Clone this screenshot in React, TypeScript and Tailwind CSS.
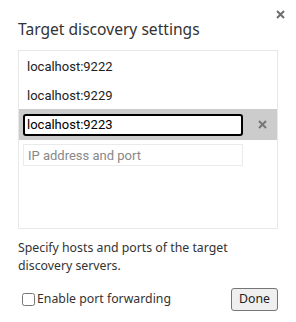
import { useState } from "react";

const hosts = ["localhost:9222", "localhost:9229"];

export default function App() {
  const [editing, setEditing] = useState("localhost:9223");
  const [forwarding, setForwarding] = useState(false);

  return (
    <div className="relative w-[296px] h-[322px] bg-white overflow-hidden rounded-bl-[3px] font-['Noto_Sans',sans-serif] text-[#303030]">
      {/* Close */}
      <button className="absolute right-[10px] top-[8px] w-[12px] h-[12px] flex items-center justify-center text-[#6e6e6e]">
        <svg width="9" height="9" viewBox="0 0 9 9">
          <path d="M1 1L8 8M8 1L1 8" stroke="currentColor" strokeWidth="2" />
        </svg>
      </button>

      <div className="px-[18px] pt-[17px]">
        <div className="text-[15.6px] leading-[24px] text-[#333]">Target discovery settings</div>

        {/* Host list */}
        <div className="mt-[9px] h-[179px] border border-[#e8e8e8] font-['Roboto',sans-serif] text-[13px] text-[#222]">
          {hosts.map((h) => (
            <div key={h} className="h-[29px] flex items-center pl-[8px] pt-[3px]">
              {h}
            </div>
          ))}
          <div className="h-[31px] bg-[#cccccc] flex items-center pl-[4px] pr-[10px]">
            <input
              value={editing}
              onChange={(e) => setEditing(e.target.value)}
              className="w-[220px] h-[22px] border-2 border-black rounded-[3px] bg-white px-[2px] text-[13px] text-black outline-none"
            />
            <span className="ml-auto text-[#777]">
              <svg width="9" height="9" viewBox="0 0 9 9">
                <path d="M1 1L8 8M8 1L1 8" stroke="currentColor" strokeWidth="2" />
              </svg>
            </span>
          </div>
          <div className="pl-[4px] pt-[4px]">
            <input
              placeholder="IP address and port"
              className="w-[220px] h-[22px] border border-[#ebebeb] px-[4px] text-[13px] placeholder:text-[#888] outline-none"
            />
          </div>
        </div>

        <p className="mt-[10px] text-[12.3px] leading-[18px] text-[#333]">
          Specify hosts and ports of the target discovery servers.
        </p>

        <div className="mt-[13px] flex items-center justify-between">
          <label className="flex items-center gap-[2px] text-[12.3px] text-[#333] pl-[4px]">
            <input
              type="checkbox"
              checked={forwarding}
              onChange={(e) => setForwarding(e.target.checked)}
              className="w-[13px] h-[13px] m-0"
            />
            Enable port forwarding
          </label>
          <button className="w-[47px] h-[23px] border border-[#767676] rounded-[3px] bg-[#efefef] text-[12.3px] text-[#222]">
            Done
          </button>
        </div>
      </div>
    </div>
  );
}
